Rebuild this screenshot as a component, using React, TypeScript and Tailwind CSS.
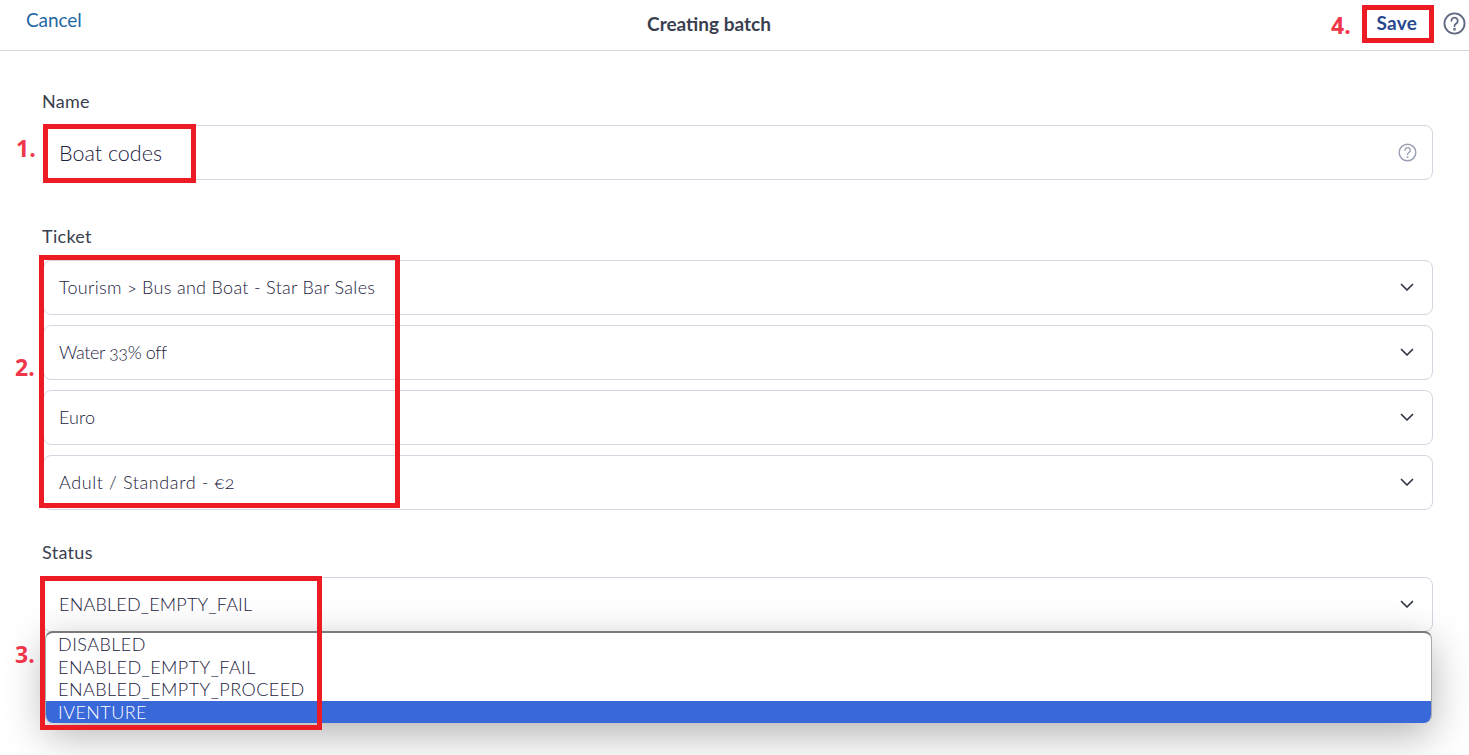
import React from "react";

function Chevron() {
  return (
    <svg width="16" height="16" viewBox="0 0 16 16" fill="none" className="mb-[2px] shrink-0 text-[#2f3542]">
      <path d="M2.5 5.5 8 11l5.5-5.5" stroke="currentColor" strokeWidth="1.7" strokeLinecap="round" strokeLinejoin="round" />
    </svg>
  );
}

function Help({ size, color, sw }: { size: number; color: string; sw: number }) {
  return (
    <svg width={size} height={size} viewBox="0 0 24 24" fill="none" stroke={color} strokeWidth={sw} strokeLinecap="round" className="shrink-0">
      <circle cx="12" cy="12" r="10.5" />
      <path d="M8.8 9.2a3.3 3.3 0 1 1 5 2.8c-1.1.7-1.8 1.3-1.8 2.6" />
      <circle cx="12" cy="18" r="0.5" fill={color} />
    </svg>
  );
}

function Select({ text, track, className = "" }: { text: string; track: string; className?: string }) {
  return (
    <div className={`flex h-[55px] items-center justify-between rounded-lg border border-[#d3d6e0] bg-white pl-[15px] pr-[17px] ${className}`}>
      <span className={`mb-[2px] text-[18px] font-light leading-6 text-[#1c2140] oldstyle-nums ${track}`}>{text}</span>
      <Chevron />
    </div>
  );
}

function Label({ children, className = "" }: { children: React.ReactNode; className?: string }) {
  return <div className={`-ml-px text-[18px] leading-6 tracking-[0.3px] text-[#3a3f50] ${className}`}>{children}</div>;
}

function RedBox({ className }: { className: string }) {
  return <div className={`pointer-events-none absolute border-[5px] border-[#ed1c24] ${className}`} />;
}

function Num({ children, className }: { children: React.ReactNode; className: string }) {
  return <div className={`absolute font-['Open_Sans',sans-serif] text-[23px] font-bold leading-6 text-[#f0364a] ${className}`}>{children}</div>;
}

export default function App() {
  return (
    <div className="relative h-[755px] w-[1469px] overflow-hidden bg-white font-['Lato',sans-serif]">
      <header className="relative flex h-[51px] items-center justify-between border-b border-[#d3d8e0] pl-[26px] pr-[3px]">
        <span className="mb-[10px] text-[19px] tracking-[-0.1px] text-[#2468a4]">Cancel</span>
        <span className="absolute bottom-[14px] left-0 right-[51px] text-center text-[19px] font-bold leading-6 text-[#3a3f50]">Creating batch</span>
        <div className="mb-[4px] flex items-center gap-[26px]">
          <span className="text-[19px] font-bold tracking-[0.2px] text-[#27488f]">Save</span>
          <Help size={23} color="#5f6880" sw={1.9} />
        </div>
      </header>

      <main className="pl-[43px] pr-[36px]">
        <Label className="mt-[38px]">Name</Label>
        <div className="mt-[12px] flex h-[55px] items-center justify-between rounded-lg border border-[#d3d6e0] bg-white pl-[15px] pr-[15px]">
          <span className="text-[21.5px] font-light leading-6 text-[#1c2140]">Boat codes</span>
          <Help size={19} color="#9aa1b3" sw={1.8} />
        </div>

        <Label className="mt-[44px]">Ticket</Label>
        <div className="mt-[12px] flex flex-col gap-[10px]">
          <Select text="Tourism > Bus and Boat - Star Bar Sales" track="tracking-[0.3px]" />
          <Select text="Water 33% off" track="tracking-[-0.4px]" />
          <Select text="Euro" track="tracking-[0.1px]" />
          <Select text="Adult / Standard - €2" track="tracking-[0.6px]" />
        </div>

        <Label className="mt-[30px]">Status</Label>
        <Select text="ENABLED_EMPTY_FAIL" track="tracking-[0.2px]" className="mt-[13px]" />
      </main>

      <div className="absolute left-[45px] top-[631px] w-[1387px] overflow-hidden rounded-lg border-x border-t-2 border-x-[#a8a8a8] border-t-[#7a7a7a] bg-white text-[18px] font-light leading-[22.5px] tracking-[0.45px] text-[#1c2140] shadow-[0_12px_40px_rgba(0,0,0,0.3)]">
        <div className="pl-[12px]">DISABLED</div>
        <div className="pl-[12px]">ENABLED_EMPTY_FAIL</div>
        <div className="pl-[12px]">ENABLED_EMPTY_PROCEED</div>
        <div className="bg-[#3968d8] pl-[12px] text-white">IVENTURE</div>
      </div>

      <RedBox className="left-[43px] top-[124px] h-[59px] w-[153px]" />
      <RedBox className="left-[39px] top-[255px] h-[253px] w-[361px]" />
      <RedBox className="left-[40px] top-[576px] h-[154px] w-[282px]" />
      <RedBox className="left-[1362px] top-[5px] h-[38px] w-[72px]" />

      <Num className="left-[16px] top-[136px]">1.</Num>
      <Num className="left-[15px] top-[355px]">2.</Num>
      <Num className="left-[15px] top-[642px]">3.</Num>
      <Num className="left-[1331px] top-[13px]">4.</Num>
    </div>
  );
}
